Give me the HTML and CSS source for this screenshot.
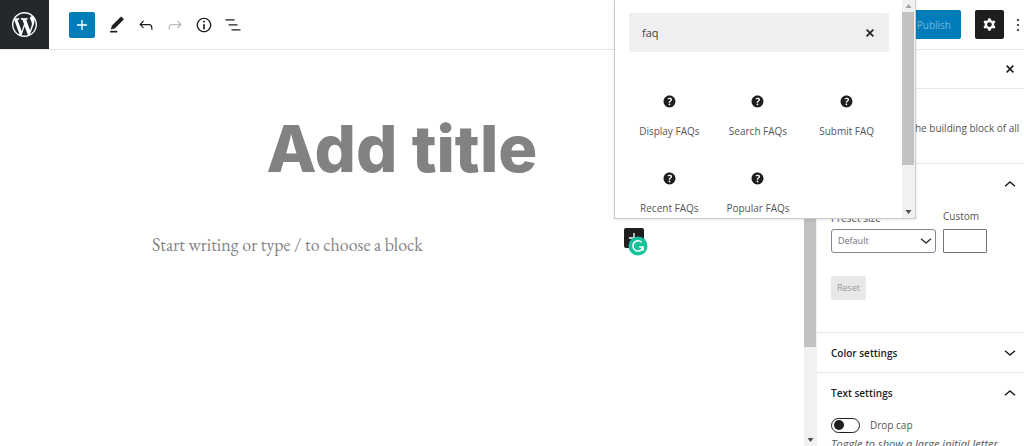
FILE: index.html
```html
<!DOCTYPE html>
<html lang="en">
<head>
    <meta charset="UTF-8">
    <meta name="viewport" content="width=device-width, initial-scale=1.0">
    <title>Add New Post</title>
    <link rel="stylesheet" href="styles.css">
</head>
<body>
    <!-- shared icon shapes -->
    <svg class="sprite" aria-hidden="true">
        <symbol id="icon-help" viewBox="0 0 20 20"><path d="M17 10c0-3.87-3.14-7-7-7-3.87 0-7 3.13-7 7s3.13 7 7 7c3.86 0 7-3.13 7-7zm-6.3 1.48H9.14v-.43c0-.38.08-.7.24-.98s.46-.57.88-.89c.41-.29.68-.53.81-.71.14-.18.2-.39.2-.62 0-.25-.09-.44-.28-.58-.19-.13-.45-.19-.79-.19-.58 0-1.25.19-2 .57l-.64-1.28c.87-.49 1.8-.74 2.77-.74.81 0 1.45.2 1.92.58.48.39.71.91.71 1.55 0 .43-.09.8-.29 1.11-.19.32-.57.67-1.11 1.06-.38.28-.61.49-.71.63-.1.15-.15.34-.15.57v.35zm-1.47 2.74c-.18-.17-.27-.42-.27-.73 0-.33.08-.58.26-.75s.43-.25.77-.25c.32 0 .57.09.75.26s.27.42.27.74c0 .3-.09.55-.27.72-.18.18-.43.27-.75.27-.33 0-.58-.09-.76-.26z"/></symbol>
        <symbol id="icon-close" viewBox="0 0 20 20"><path d="M14.95 6.46L11.41 10l3.54 3.54-1.41 1.41L10 11.42l-3.53 3.53-1.42-1.42L8.58 10 5.05 6.47l1.42-1.42L10 8.58l3.54-3.53z"/></symbol>
        <symbol id="icon-up" viewBox="0 0 20 20"><path d="M5 12.2l5-4.2 5 4.2" fill="none" stroke="currentColor" stroke-width="1.5"/></symbol>
        <symbol id="icon-down" viewBox="0 0 20 20"><path d="M5 7.8l5 4.2 5-4.2" fill="none" stroke="currentColor" stroke-width="1.5"/></symbol>
        <symbol id="icon-plus" viewBox="0 0 24 24"><path d="M18 11.2h-5.2V6h-1.6v5.2H6v1.6h5.2V18h1.6v-5.2H18z"/></symbol>
    </svg>

    <div class="editor">
        <header class="header">
            <a class="logo" href="#" aria-label="View posts">
                <svg viewBox="0 0 20 20"><path d="M20 10c0-5.51-4.49-10-10-10C4.48 0 0 4.49 0 10c0 5.52 4.48 10 10 10 5.51 0 10-4.48 10-10zM7.78 15.37L4.37 6.22c.55-.02 1.17-.08 1.17-.08.5-.06.44-1.13-.06-1.11 0 0-1.45.11-2.37.11-.18 0-.37 0-.58-.01C4.12 2.69 6.87 1.11 10 1.11c2.33 0 4.45.87 6.05 2.34-.68-.11-1.65.39-1.65 1.58 0 .74.45 1.36.9 2.1.35.61.55 1.36.55 2.46 0 1.49-1.4 5-1.4 5l-3.03-8.37c.54-.02.82-.17.82-.17.5-.05.44-1.25-.06-1.22 0 0-1.44.12-2.38.12-.87 0-2.33-.12-2.33-.12-.5-.03-.56 1.2-.06 1.22l.92.08 1.26 3.41zM17.41 10c.24-.64.74-1.87.43-4.25.7 1.29 1.05 2.71 1.05 4.25 0 3.29-1.73 6.24-4.4 7.78.97-2.59 1.94-5.2 2.92-7.78zM6.1 18.09C3.12 16.65 1.11 13.53 1.11 10c0-1.3.23-2.48.72-3.59C3.25 10.3 4.67 14.2 6.1 18.09zm4.03-6.63l2.58 6.98c-.86.29-1.76.45-2.71.45-.79 0-1.57-.11-2.29-.33.81-2.38 1.62-4.74 2.42-7.1z"/></svg>
            </a>
            <div class="tools">
                <button class="tool primary" type="button" aria-label="Add block"><svg><use href="#icon-plus"/></svg></button>
                <button class="tool" type="button" aria-label="Tools"><svg viewBox="0 0 24 24"><path d="M20.1 5.1L16.9 2 6.2 12.7l-1.3 4.4 4.5-1.3L20.1 5.1zM4 20.8h8v-1.5H4v1.5z" stroke="currentColor" stroke-width=".5"/></svg></button>
                <button class="tool" type="button" aria-label="Undo"><svg viewBox="0 0 24 24"><path d="M18.3 11.7c-.6-.6-1.4-.9-2.3-.9H6.7l2.9-3.3-1.1-1-4.5 5L8.5 16l1-1-2.7-2.7H16c.5 0 .9.2 1.3.5 1 1 1 3.4 1 4.5v.3h1.5v-.2c0-1.5 0-4.3-1.5-5.7z"/></svg></button>
                <button class="tool" type="button" aria-label="Redo" disabled><svg viewBox="0 0 24 24"><path d="M15.6 6.5l-1.1 1 2.9 3.3H8c-.9 0-1.7.3-2.3.9-1.4 1.5-1.4 4.2-1.4 5.6v.2h1.5v-.3c0-1.1 0-3.5 1-4.5.3-.3.7-.5 1.3-.5h9.2L14.5 15l1.1 1.1 4.6-4.6-4.6-5z"/></svg></button>
                <button class="tool" type="button" aria-label="Details"><svg viewBox="0 0 24 24"><path d="M12 3.2c-4.8 0-8.8 3.9-8.8 8.8 0 4.8 3.9 8.8 8.8 8.8 4.8 0 8.8-3.9 8.8-8.8 0-4.8-4-8.8-8.8-8.8zm0 16c-4 0-7.2-3.3-7.2-7.2C4.8 8 8 4.8 12 4.8s7.2 3.3 7.2 7.2c0 4-3.2 7.2-7.2 7.2zM11 17h2v-6h-2v6zm0-8h2V7h-2v2z"/></svg></button>
                <button class="tool" type="button" aria-label="List view"><svg viewBox="0 0 24 24"><path d="M13.8 5.2H3v1.5h10.8V5.2zm-3.6 12v1.5H21v-1.5H10.2zm7.2-6H6.6v1.5h10.8v-1.5z"/></svg></button>
            </div>
            <div class="actions">
                <button class="publish" type="button">Publish</button>
                <button class="settings-toggle" type="button" aria-label="Settings"><svg viewBox="0 0 24 24"><path fill-rule="evenodd" d="M10.289 4.836A1 1 0 0111.275 4h1.306a1 1 0 01.987.836l.244 1.466c.787.26 1.503.679 2.108 1.218l1.393-.522a1 1 0 011.216.437l.653 1.13a1 1 0 01-.23 1.273l-1.148.944a6.025 6.025 0 010 2.435l1.149.946a1 1 0 01.23 1.272l-.653 1.13a1 1 0 01-1.216.437l-1.394-.522c-.605.54-1.32.958-2.108 1.218l-.244 1.466a1 1 0 01-.987.836h-1.306a1 1 0 01-.986-.836l-.244-1.466a5.995 5.995 0 01-2.108-1.218l-1.394.522a1 1 0 01-1.217-.436l-.653-1.131a1 1 0 01.23-1.272l1.149-.946a6.026 6.026 0 010-2.435l-1.148-.944a1 1 0 01-.23-1.272l.653-1.131a1 1 0 011.217-.437l1.393.522a5.994 5.994 0 012.108-1.218l.244-1.466zM14.929 12a3 3 0 11-6 0 3 3 0 016 0z"/></svg></button>
                <button class="more" type="button" aria-label="Options"><svg viewBox="0 0 4 16"><circle cx="2" cy="3" r="1.1"/><circle cx="2" cy="8" r="1.1"/><circle cx="2" cy="13" r="1.1"/></svg></button>
            </div>
        </header>

        <div class="body">
            <main class="canvas">
                <input class="post-title" type="text" placeholder="Add title" aria-label="Add title">
                <div class="block">
                    <input class="block-text" type="text" placeholder="Start writing or type / to choose a block" aria-label="Block text">
                    <div class="inserter">
                        <button class="add-block" type="button" aria-label="Add block"><svg><use href="#icon-plus"/></svg></button>
                        <svg class="grammar-badge" viewBox="0 0 20 20"><circle cx="10" cy="10" r="9.5" fill="#15c39a"/><path d="M13.6 6.3A5.1 5.1 0 1 0 15 11h-3.8M15 11v3.8" fill="none" stroke="#fff" stroke-width="1.6"/></svg>
                    </div>
                </div>
            </main>

            <div class="scrollbar page-scroll" aria-hidden="true">
                <svg viewBox="0 0 12 12"><path d="M3 8l3-4 3 4z"/></svg>
                <div class="thumb"></div>
                <svg viewBox="0 0 12 12"><path d="M3 4l3 4 3-4z"/></svg>
            </div>

            <aside class="sidebar">
                <div class="sidebar-top">
                    <button class="icon-button" type="button" aria-label="Close settings"><svg><use href="#icon-close"/></svg></button>
                </div>
                <div class="block-card">
                    <svg viewBox="0 0 24 24"><path d="M18.3 4H9.9c-2.7 0-4.9 2.2-4.9 4.9s2.2 4.9 4.9 4.9h1.5V20h1.5V5.5h1.9V20h1.5V5.5h2z"/></svg>
                    <div>
                        <h2>Paragraph</h2>
                        <p>Start with the building block of all narrative.</p>
                    </div>
                </div>
                <section class="panel typography">
                    <button class="panel-title" type="button">Typography<svg><use href="#icon-up"/></svg></button>
                    <div class="size-row">
                        <div class="field preset">
                            <label for="preset">Preset size</label>
                            <div class="select-wrap">
                                <select id="preset"><option>Default</option></select>
                                <svg><use href="#icon-down"/></svg>
                            </div>
                        </div>
                        <div class="field custom">
                            <label for="custom">Custom</label>
                            <input id="custom" type="text">
                        </div>
                    </div>
                    <button class="reset" type="button" disabled>Reset</button>
                </section>
                <section class="panel">
                    <button class="panel-title" type="button">Color settings<svg><use href="#icon-down"/></svg></button>
                </section>
                <section class="panel">
                    <button class="panel-title" type="button">Text settings<svg><use href="#icon-up"/></svg></button>
                    <label class="toggle"><input type="checkbox" role="switch">Drop cap</label>
                    <p class="hint">Toggle to show a large initial letter.</p>
                </section>
            </aside>
        </div>

        <!-- block inserter popover -->
        <div class="popover">
            <div class="popover-content">
                <div class="search">
                    <input type="text" value="faq" aria-label="Search for a block">
                    <button class="icon-button" type="button" aria-label="Clear search"><svg><use href="#icon-close"/></svg></button>
                </div>
                <div class="results">
                    <button type="button"><svg><use href="#icon-help"/></svg>Display FAQs</button>
                    <button type="button"><svg><use href="#icon-help"/></svg>Search FAQs</button>
                    <button type="button"><svg><use href="#icon-help"/></svg>Submit FAQ</button>
                    <button type="button"><svg><use href="#icon-help"/></svg>Recent FAQs</button>
                    <button type="button"><svg><use href="#icon-help"/></svg>Popular FAQs</button>
                </div>
            </div>
            <div class="scrollbar" aria-hidden="true">
                <svg class="dim" viewBox="0 0 12 12"><path d="M3 8l3-4 3 4z"/></svg>
                <div class="thumb"></div>
                <svg viewBox="0 0 12 12"><path d="M3 4l3 4 3-4z"/></svg>
            </div>
        </div>
    </div>
</body>
</html>
```

FILE: styles.css
```css
* {
    box-sizing: border-box;
}
body {
    margin: 0;
    font-family: "Open Sans", "Noto Sans", sans-serif;
    font-size: 10px;
    line-height: 16px;
    color: #555;
    background: #fff;
}
button, input, select {
    font: inherit;
    color: inherit;
    border: 0;
    padding: 0;
    margin: 0;
    background: none;
}
h2, p {
    margin: 0;
}
svg {
    display: block;
    flex: none;
    width: 20px;
    height: 20px;
    fill: currentColor;
}
.sprite {
    position: absolute;
    width: 0;
    height: 0;
}
.editor {
    position: relative;
    display: flex;
    flex-direction: column;
    height: 100vh;
    overflow: hidden;
}

/* header */
.header {
    display: flex;
    align-items: center;
    flex: none;
    border-bottom: 1px solid #e6e6e6;
}
.logo {
    display: flex;
    padding: 12px;
    color: #fff;
    background: #23282d;
}
.logo svg {
    width: 25px;
    height: 25px;
}
.tools {
    display: flex;
    align-items: center;
    gap: 3px;
    margin-left: 20px;
    color: #1e1e1e;
}
.tool {
    display: flex;
    padding: 3px;
}
.tool.primary {
    margin-right: 6px;
    color: #fff;
    background: #007cba;
    border-radius: 2px;
}
.tool:disabled {
    color: #bbb;
}
.actions {
    display: flex;
    align-items: center;
    margin-left: auto;
}
.publish {
    height: 29px;
    padding: 0 10px;
    margin-right: 14px;
    color: #72b8dc;
    background: #007cba;
    border-radius: 2px;
}
.settings-toggle {
    display: flex;
    padding: 5px;
    color: #fff;
    background: #1e1e1e;
    border-radius: 2px;
}
.settings-toggle svg {
    width: 19px;
    height: 19px;
}
.more {
    margin: 0 4px 0 12px;
    color: #1e1e1e;
}
.more svg {
    width: 4px;
    height: 16px;
}

/* canvas */
.body {
    display: flex;
    flex: 1;
    min-height: 0;
}
.canvas {
    flex: 1;
    min-width: 0;
    padding-top: 56px;
}
.post-title {
    display: block;
    width: 100%;
    height: 84px;
    font-family: Inter, sans-serif;
    font-size: 65px;
    font-weight: 800;
    text-align: center;
}
.post-title::placeholder {
    color: #828282;
    opacity: 1;
}
.block {
    display: flex;
    align-items: center;
    max-width: 500px;
    margin: 38px auto 0;
    padding-right: 8px;
}
.block-text {
    flex: 1;
    height: 28px;
    font-family: "EB Garamond", Garamond, "Liberation Serif", serif;
    font-size: 18px;
}
.block-text::placeholder {
    color: #858585;
    opacity: 1;
}
.inserter {
    position: relative;
    margin-bottom: 12px;
}
.add-block {
    display: flex;
    color: #fff;
    background: #1e1e1e;
    border-radius: 2px;
}
.grammar-badge {
    position: absolute;
    top: 8px;
    left: 4px;
}

/* scrollbars */
.scrollbar {
    display: flex;
    flex-direction: column;
    flex: none;
    width: 13px;
    color: #505050;
    background: #f1f1f1;
}
.scrollbar svg {
    width: 13px;
    height: 12px;
}
.scrollbar .dim {
    color: #a3a3a3;
}
.thumb {
    height: 153px;
    margin: 0 1px auto 0;
    background: #c1c1c1;
}
.page-scroll .thumb {
    height: 72%;
}

/* sidebar */
.sidebar {
    flex: none;
    width: 207px;
    overflow: hidden;
}
.sidebar-top {
    display: flex;
    justify-content: flex-end;
    align-items: center;
    height: 39px;
    padding-right: 6px;
    border-bottom: 1px solid #e6e6e6;
}
.icon-button {
    display: flex;
    color: #1e1e1e;
}
.icon-button svg {
    width: 16px;
    height: 16px;
}
.block-card {
    display: flex;
    gap: 13px;
    height: 74px;
    padding: 15px 0 0 14px;
}
.block-card h2 {
    font-size: 10px;
}
.panel {
    padding: 0 4px 0 14px;
    border-top: 1px solid #e6e6e6;
}
.panel-title {
    display: flex;
    align-items: center;
    justify-content: space-between;
    width: 100%;
    height: 39px;
    font-weight: 600;
    color: #1e1e1e;
}
.typography {
    height: 169px;
}
.size-row {
    display: flex;
    align-items: flex-end;
    gap: 7px;
    padding-top: 5px;
}
.field {
    display: flex;
    flex-direction: column;
    gap: 5px;
}
.preset {
    gap: 3px;
    width: 105px;
}
.custom {
    width: 44px;
}
.select-wrap {
    position: relative;
}
.select-wrap select {
    width: 100%;
    height: 24px;
    padding: 0 6px;
    font-size: 9px;
    color: #6b727a;
    border: 1px solid #7e8993;
    border-radius: 3px;
    appearance: none;
}
.select-wrap svg {
    position: absolute;
    top: 2px;
    right: 0;
    color: #32373c;
    pointer-events: none;
}
.custom input {
    width: 100%;
    height: 24px;
    border: 1px solid #757575;
    border-radius: 1px;
}
.reset {
    height: 24px;
    padding: 0 6px;
    margin-top: 23px;
    font-size: 9px;
    color: #999;
    background: #e8e8e8;
    border-radius: 2px;
}
.toggle {
    display: flex;
    align-items: center;
    gap: 10px;
    padding-top: 5px;
}
.toggle input {
    display: flex;
    align-items: center;
    width: 29px;
    height: 15px;
    padding: 0 2px;
    border: 1px solid #1e1e1e;
    border-radius: 8px;
    appearance: none;
}
.toggle input::before {
    content: "";
    width: 10px;
    height: 10px;
    border-radius: 50%;
    background: #1e1e1e;
}
.hint {
    padding-top: 3px;
    font-size: 11px;
    font-style: italic;
    white-space: nowrap;
}

/* popover */
.popover {
    position: absolute;
    top: 0;
    right: 108px;
    display: flex;
    width: 302px;
    height: 219px;
    overflow: hidden;
    background: #fff;
    border: 1px solid #ccc;
    border-top: 0;
    box-shadow: 0 1px 3px rgba(0, 0, 0, 0.1);
}
.popover-content {
    flex: 1;
    padding: 13px 13px 0 14px;
}
.search {
    display: flex;
    align-items: center;
    height: 39px;
    padding: 0 11px 0 13px;
    background: #efefef;
    border-radius: 2px;
}
.search input {
    flex: 1;
    min-width: 0;
    font-size: 11px;
    color: #444;
}
.results {
    display: grid;
    grid-template-columns: repeat(3, 1fr);
    row-gap: 31px;
    margin: 41px -2px 0 -4px;
}
.results button {
    display: flex;
    flex-direction: column;
    align-items: center;
    gap: 13px;
}
.results svg {
    width: 17px;
    height: 17px;
    color: #1e1e1e;
}
```
